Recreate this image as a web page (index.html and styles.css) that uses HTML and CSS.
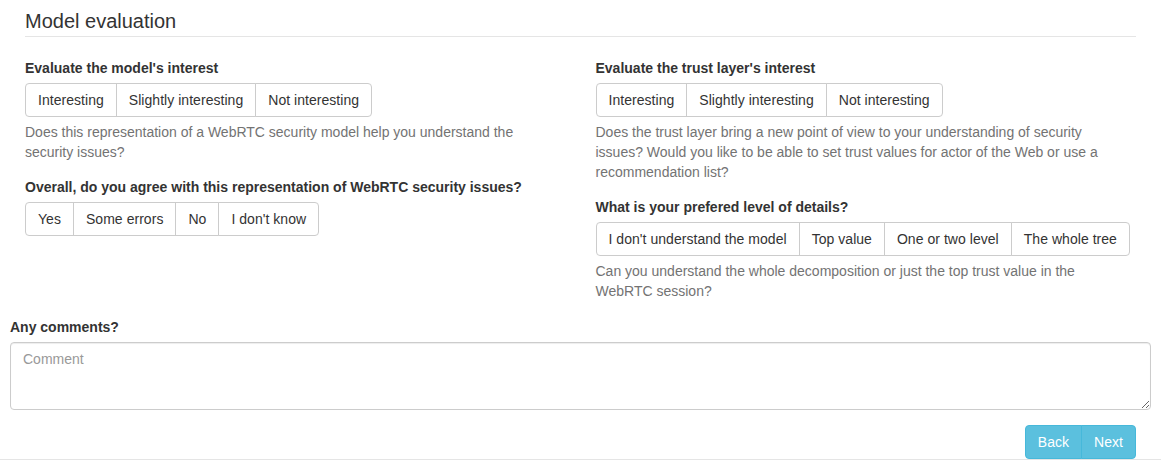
FILE: index.html
```html
<!DOCTYPE html>
<html>
<head>
<meta charset="utf-8">
<link rel="stylesheet" href="styles.css">
</head>
<body>
<div class="page">
  <div class="container">
    <div class="row">
      <div class="col-full">
        <h3 class="page-title">Model evaluation</h3>
      </div>
      <div class="col">
        <div class="form-group">
          <label class="control-label">Evaluate the model's interest</label>
          <div class="btn-group">
            <button class="btn">Interesting</button><button class="btn">Slightly interesting</button><button class="btn">Not interesting</button>
          </div>
          <p class="help-block">Does this representation of a WebRTC security model help you understand the security issues?</p>
        </div>
        <div class="form-group">
          <label class="control-label">Overall, do you agree with this representation of WebRTC security issues?</label>
          <div class="btn-group">
            <button class="btn">Yes</button><button class="btn">Some errors</button><button class="btn">No</button><button class="btn">I don't know</button>
          </div>
        </div>
      </div>
      <div class="col">
        <div class="form-group">
          <label class="control-label">Evaluate the trust layer's interest</label>
          <div class="btn-group">
            <button class="btn">Interesting</button><button class="btn">Slightly interesting</button><button class="btn">Not interesting</button>
          </div>
          <p class="help-block">Does the trust layer bring a new point of view to your understanding of security issues? Would you like to be able to set trust values for actor of the Web or use a recommendation list?</p>
        </div>
        <div class="form-group">
          <label class="control-label">What is your prefered level of details?</label>
          <div class="btn-group">
            <button class="btn">I don't understand the model</button><button class="btn">Top value</button><button class="btn">One or two level</button><button class="btn">The whole tree</button>
          </div>
          <p class="help-block">Can you understand the whole decomposition or just the top trust value in the WebRTC session?</p>
        </div>
      </div>
    </div>
    <div class="form-group comments">
      <label class="control-label">Any comments?</label>
      <textarea class="form-control" placeholder="Comment"></textarea>
    </div>
    <div class="actions">
      <div class="btn-group">
        <button class="btn btn-info">Back</button><button class="btn btn-info">Next</button>
      </div>
    </div>
  </div>
  <div class="footer-line"></div>
</div>
</body>
</html>
```

FILE: styles.css
```css
* { box-sizing: border-box; }
html, body {
  margin: 0;
  padding: 0;
  background: #fff;
}
body {
  font-family: "Liberation Sans", Arial, Helvetica, sans-serif;
  font-size: 14px;
  line-height: 20px;
  color: #333;
}
.container {
  padding: 0 10px;
}
.row {
  display: flex;
  flex-wrap: wrap;
}
.col-full {
  width: 100%;
  padding: 0 15px;
}
.col {
  width: 50%;
  padding: 0 15px;
}
.page-title {
  margin: 10px 0 21px;
  padding-bottom: 4px;
  font-size: 20px;
  line-height: 22px;
  font-weight: 500;
  color: #333;
  border-bottom: 1px solid #e5e5e5;
}
.form-group {
  margin-bottom: 15px;
}
.form-group::after {
  content: "";
  display: table;
}
.control-label {
  display: block;
  font-weight: bold;
  margin-bottom: 5px;
}
.btn-group {
  display: inline-flex;
  vertical-align: middle;
}
.btn {
  font-family: inherit;
  font-size: 14px;
  line-height: 20px;
  letter-spacing: 0.04px;
  padding: 6px 12px;
  color: #333;
  background: #fff;
  border: 1px solid #ccc;
  margin: 0;
  border-radius: 0;
  cursor: pointer;
}
.btn + .btn {
  margin-left: -1px;
}
.btn:first-child {
  border-radius: 4px 0 0 4px;
}
.btn:last-child {
  border-radius: 0 4px 4px 0;
}
.help-block {
  margin: 5px 0 0;
  padding-right: 20px;
  color: #737373;
}
.comments {
  padding-top: 1px;
}
.form-control {
  display: block;
  width: 100%;
  height: 68px;
  padding: 6px 12px;
  font-family: inherit;
  font-size: 14px;
  line-height: 20px;
  color: #555;
  background: #fff;
  border: 1px solid #ccc;
  border-radius: 4px;
  box-shadow: inset 0 1px 1px rgba(0,0,0,.075);
  resize: vertical;
}
.form-control::placeholder {
  color: #999;
}
.actions {
  display: flex;
  justify-content: flex-end;
  padding-right: 15px;
}
.btn-info {
  color: #fff;
  background: #5bc0de;
  border-color: #46b8da;
}
.footer-line {
  border-top: 1px solid #e5e5e5;
}
```
